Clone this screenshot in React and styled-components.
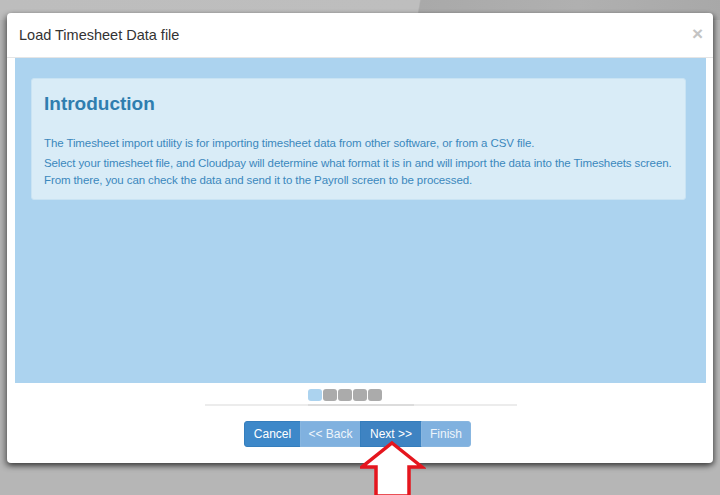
import styled, { createGlobalStyle } from "styled-components"

const Global = createGlobalStyle`
    html, body {
        margin: 0;
        padding: 0;
        width: 720px;
        height: 495px;
        overflow: hidden;
        font-family: "Liberation Sans", Arial, sans-serif;
    }
`

const Backdrop = styled.div`
    position: relative;
    width: 720px;
    height: 495px;
    box-sizing: border-box;
    padding: 13px 7px 0 7px;
    background: linear-gradient(100deg, #bdbdbd 0%, #bebebe 58%, #a9a9a9 58.2%, #b0b0b0 80%, #a8a8a8 100%);
    background-size: 100% 20px;
    background-repeat: no-repeat;
    background-color: #b6b6b6;
`

const Modal = styled.div`
    display: flex;
    flex-direction: column;
    width: 706px;
    height: 450px;
    background: #fff;
    border-radius: 4px;
    box-shadow: -2px 3px 6px rgba(0,0,0,0.45), 2px 2px 5px rgba(0,0,0,0.4);
`

const Header = styled.div`
    display: flex;
    align-items: center;
    justify-content: space-between;
    height: 45px;
    padding: 0 12px;
    border-bottom: 1px solid #e5e5e5;
    box-sizing: border-box;
`

const Title = styled.h4`
    margin: 0;
    font-size: 14.5px;
    font-weight: normal;
    color: #333;
`

const Close = styled.span`
    font-size: 19px;
    font-weight: bold;
    color: #c4c4c4;
    line-height: 1;
    margin-top: -4px;
    margin-right: -2px;
`

const Body = styled.div`
    padding: 0 7px 0 8px;
`

const Panel = styled.div`
    height: 325px;
    background: #acd3ef;
    padding: 20px 20px 0 16px;
    box-sizing: border-box;
`

const Alert = styled.div`
    background: #d9ecf7;
    border: 1px solid #c9e3f3;
    border-radius: 3px;
    padding: 14px 12px 7px 12px;
    color: #3b88bd;
`

const Heading = styled.h2`
    margin: 0 0 20px 0;
    font-size: 19px;
    font-weight: bold;
    color: #2f7eaf;
`

const Para = styled.p`
    margin: 0 0 3px 0;
    font-size: 11.5px;
    letter-spacing: -0.1px;
    line-height: 17px;
`

const Pager = styled.div`
    display: flex;
    flex-direction: column;
    align-items: center;
    margin-top: 6px;
`

const Steps = styled.div`
    display: flex;
    gap: 1px;
    margin-left: -32px;
`

const Step = styled.span`
    width: 14px;
    height: 12px;
    border-radius: 3px;
    background: ${p => p.$active ? "#acd3ef" : "#ababab"};
`

const Track = styled.div`
    width: 312px;
    height: 2px;
    margin-top: 3px;
    background: linear-gradient(90deg, #ececec 0px, #ececec 103px, #dcdcdc 103px, #dcdcdc 209px, #ececec 209px);
`

const Buttons = styled.div`
    display: flex;
    justify-content: center;
    margin-top: 15px;
    margin-left: -6px;
`

const Btn = styled.button`
    height: 26px;
    width: ${p => p.$w}px;
    border: 1px solid ${p => p.$light ? "#88b6e0" : "#357ebd"};
    background: ${p => p.$light ? "#80b1df" : p.$dark ? "#3e83c2" : "#3d88c9"};
    color: ${p => p.$light ? "#eef5fb" : "#fff"};
    font-family: "Liberation Sans", Arial, sans-serif;
    font-size: 12px;
    padding: 0;
    margin-left: -1px;
    &:first-child {
        border-radius: 3px 0 0 3px;
        margin-left: 0;
    }
    &:last-child {
        border-radius: 0 3px 3px 0;
    }
`

const Arrow = styled.svg`
    position: absolute;
    left: 360px;
    top: 440px;
`

const App = () => {
    const steps = [true, false, false, false, false]
    return (
        <>
            <Global />
            <Backdrop>
                <Modal>
                    <Header>
                        <Title>Load Timesheet Data file</Title>
                        <Close>×</Close>
                    </Header>
                    <Body>
                        <Panel>
                            <Alert>
                                <Heading>Introduction</Heading>
                                <Para>The Timesheet import utility is for importing timesheet data from other software, or from a CSV file.</Para>
                                <Para>Select your timesheet file, and Cloudpay will determine what format it is in and will import the data into the Timesheets screen. From there, you can check the data and send it to the Payroll screen to be processed.</Para>
                            </Alert>
                        </Panel>
                        <Pager>
                            <Steps>
                                {steps.map((s, i) => <Step key={i} $active={s} />)}
                            </Steps>
                            <Track />
                        </Pager>
                        <Buttons>
                            <Btn $w={57}>Cancel</Btn>
                            <Btn $w={61} $light>&lt;&lt; Back</Btn>
                            <Btn $w={62} $dark>Next &gt;&gt;</Btn>
                            <Btn $w={50} $light>Finish</Btn>
                        </Buttons>
                    </Body>
                </Modal>
                <Arrow width="66" height="56" viewBox="0 0 66 56">
                    <path d="M32 3 L62 27 L49 27 L49 56 L16 56 L16 27 L2 27 Z" fill="#fff" stroke="#e5161e" strokeWidth="3.5" strokeLinejoin="miter" />
                </Arrow>
            </Backdrop>
        </>
    )
}

export default App
